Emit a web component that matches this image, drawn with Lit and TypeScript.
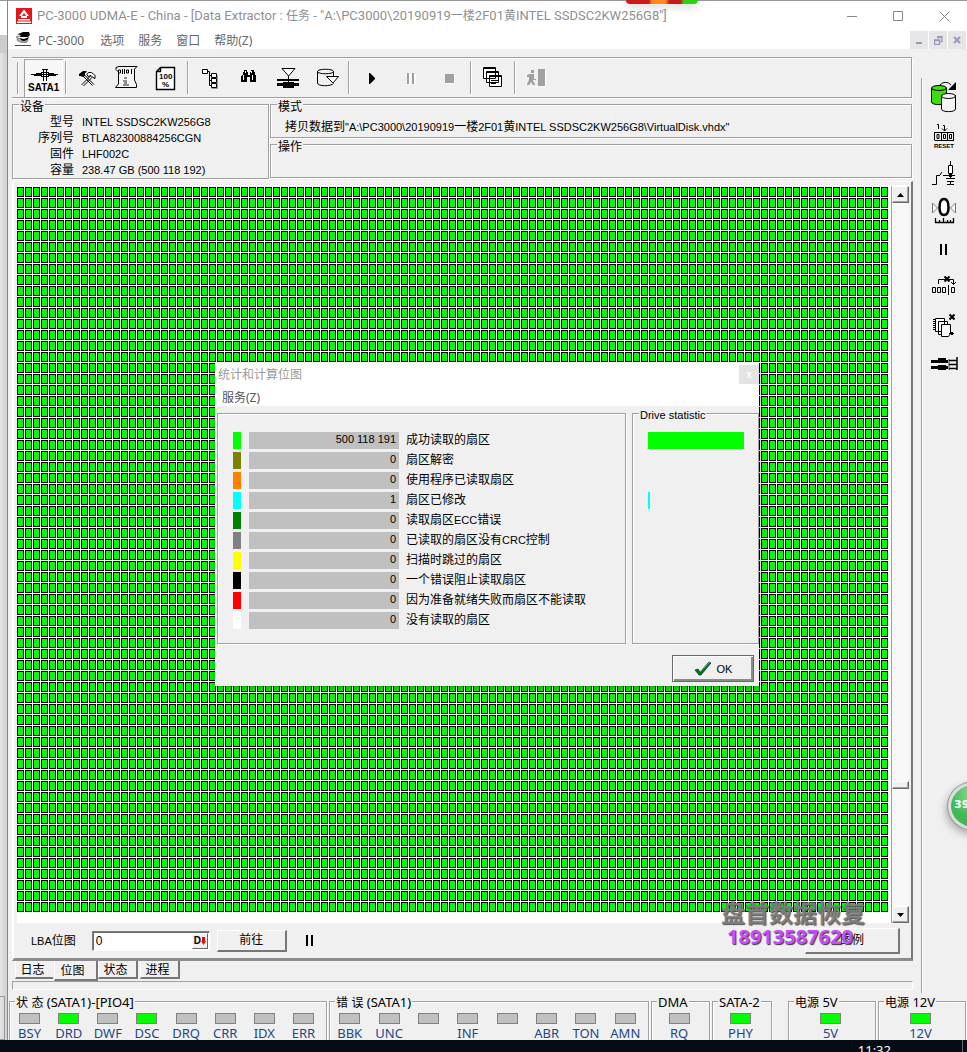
import { LitElement, html, css, svg } from "lit";
import { customElement, property } from "lit/decorators.js";

// Wraps every run of Latin text, which is set at its own size beside the Chinese text.
const mixed = (text: string) =>
  text.split(/([\x20-\x7e]+)/).filter(Boolean).map((part) => (/^[\x20-\x7e]/.test(part) ? html`<span class="latin">${part}</span>` : part));

const toolIcons = {
  sata: svg`<path d="M31 74.5H58" stroke="#000"/><path d="M36 73h6v3h-6zM48 73h6v3h-6zM34 74h2v2h-2zM54 74h2v2h-2z"/><path d="M43.500 69V81M46.500 69V81M42 69.500h6M41 72.500h8M41 76.500h8" stroke="#000" fill="none"/><text x="28" y="91" class="t11">SATA1</text>`,
  tools: svg`<path d="M81.500 85L91 75.500M83.500 86L93 76.500M84 74.500l10 10M83 76l9.500 9.500" stroke="#000" fill="none"/><path d="M79 76v-2l4-3h3l1 1-2 1v3l-3 1-1-1z"/><path d="M88.500 72.500h3l2 1.500 1.500 1.500v3l-2-1-2-2-3 1-1-2z" fill="#fff" stroke="#000"/>`,
  scroll: svg`<path d="M119 66.500H137L134.500 69V80L136.500 84.500V87.500H115.500L118.500 84V72L116 69.500V67.500z" fill="#f6f6f6" stroke="#000"/><path d="M118.500 70v3h2v-3zM122.500 69v5M124.500 69v5M126.500 70v3h2v-3zM131.500 69v5" fill="none" stroke="#000"/><path d="M124 77h3v2h-3zM123 80h4v4h2v2h-6v-2h1v-2h-1z" fill="#909090"/>`,
  percent: svg`<path d="M160.500 67.500H174.500V89.500H156.500V71.500zM156.500 71.500H160.500V67.500" fill="#fff" stroke="#000" stroke-width="1.400"/><text x="159" y="79" class="t8">100</text><text x="162" y="87" class="t8">%</text>`,
  tree: svg`<path d="M202.500 69.500h5v4h-5zM211.500 73.500h5v4h-5zM211.500 78.500h5v4h-5zM211.500 83.500h5v4h-5z" fill="#fff" stroke="#000"/><path d="M208 71.500H209.500V85.500H212M210 75.500h2M210 80.500h2" stroke="#000" fill="none"/><path d="M217.500 75v13.500h-6" stroke="#999" fill="none"/>`,
  binoc: svg`<path d="M243 72h1v-2h3v2h1v3h2v-3h1v-2h3v2h1v3h1v7h-6v-5h-3v5h-6v-6h1v-1h1z"/><path d="M243.500 75v5M252.500 75v5M245.500 71v2M251.500 71v2" stroke="#fff"/>`,
  target: svg`<path d="M282 68.500H295L288.500 76z" fill="#fff" stroke="#000"/><path d="M277 79h22v2h-22zM277 83h22v3h-22zM283 82h11v1h-11zM283 86h11v2h-11zM288 76h1v12h-1z"/>`,
  disk: svg`<path d="M317.500 71.500C317.500 68.500 333.500 68.500 333.500 71.500S317.500 74.500 317.500 71.500V83C317.500 86.500 331 86.500 333.500 83.500M333.500 71V76" fill="none" stroke="#000"/><path d="M326.500 76.500H338.500L333 83z" fill="#fff" stroke="#000"/>`,
  play: svg`<path d="M369 73v11h1l5-5v-1l-5-5z"/>`,
  pause: svg`<path d="M408 74h3v11h-3zM413 74h3v11h-3z" fill="#fff"/><path d="M407 73h2v11h-2zM412 73h2v11h-2z" fill="#a0a0a0"/>`,
  stop: svg`<path d="M446 75h9v9h-9z" fill="#fff"/><path d="M445 74h9v9h-9z" fill="#a0a0a0"/>`,
  windows: svg`<g fill="#fff" stroke="#000"><path d="M483.500 67.500h12v11h-12zM486.500 71.500h12v11h-12zM489.500 75.500h12v11h-12z"/><path d="M483 68.500h13M486 72.500h13M489 76.500h13M491 80.500h8M491 83.500h5"/></g>`,
  exit: svg`<path d="M539 70h7v17h-7z" fill="#fff"/><path d="M538 69h7v17h-7zM531 70h3v3h-3zM529 74h5v5h2v1h-3v1l2 3v1h-2l-2-3-2 3h-2v-1l2-4v-3h-2v-2z" fill="#a0a0a0"/><path d="M528 86.500h9" stroke="#fff" stroke-dasharray="1 1"/>`,
};

const sideIcons = [
  ["复制磁盘", svg`<path d="M931.500 88V102C931.500 105.500 946.500 105.500 946.500 102V88" fill="#3fdc0c" stroke="#000"/><ellipse cx="939" cy="88" rx="7.500" ry="2.500" fill="#3fdc0c" stroke="#000"/><path d="M941.500 95V109C941.500 112.500 955.500 112.500 955.500 109V95" fill="#f4f4f4" stroke="#000"/><ellipse cx="948.500" cy="96" rx="7" ry="2.500" fill="#f4f4f4" stroke="#000"/><path d="M940 85C943 81.500 948 81.500 951 85" fill="none" stroke="#000"/><path d="M956 82v8h-8z"/>`],
  ["复位", svg`<path d="M937 124.500h1.500V129M943 125.500h1.500V131M942 128.500l2.500 2.500L947 128.500" fill="none" stroke="#000"/><path d="M934.500 132.500H954M934.500 140.500H954M934.500 132v8M941.500 132v8M947.500 132v8M953.500 132v8" fill="none" stroke="#000"/><path d="M937 134.500h2v4h-2zM943.500 134.500h2v4h-2zM949.500 134.500h2v4h-2z" fill="none" stroke="#000"/><text x="934" y="148" class="t7">RESET</text>`],
  ["电源开关", svg`<path d="M932 184.500h4.500V175.500H940M940 175l2-3M943 175.500H955M950.500 161V165M950.500 173V178M946 178.500h9M947 181.500h7M950.500 182V184M947 184.500h7" fill="none" stroke="#000"/><path d="M948.500 165.500h4v8h-4z" fill="#fff" stroke="#000"/><path d="M949 174h3v3h-3z"/>`],
  ["重新校准", svg`<path d="M932.500 203v10l5-5zM955.500 203v10l-5-5z" fill="#fff" stroke="#777"/><path d="M944 199C947 199 948.500 202 948.500 207.500S947 215 944 215S939.500 213 939.500 207.500S941 199 944 199z" fill="#fff" stroke="#000" stroke-width="2.500"/><path d="M935 222.500h19M935.500 218v5M939.500 220v3M943.500 218v5M947.500 220v3M950.500 220v3M953.500 218v5" stroke="#000" stroke-width="1.300" fill="none"/>`],
  ["暂停", svg`<path d="M940 244h2v11h-2zM945 244h2v11h-2z"/>`],
  ["跳过", svg`<path d="M938.500 284V279.500H953.500V284M951 282l2.500 2.500L956 282" fill="none" stroke="#000"/><path d="M944.500 276.500l5 5M949.500 276.500l-5 5" stroke="#000" stroke-width="2"/><path d="M932.500 287.500h3v5h-3zM937.500 287.500h3v5h-3zM942.500 287.500h3v5h-3zM951.500 287.500h3v5h-3zM948.500 285v10" fill="none" stroke="#000"/>`],
  ["清除", svg`<path d="M935.500 318.500h9v13h-9zM938.500 321.500h9v13h-9z" fill="#fff" stroke="#000"/><path d="M941.500 324.500h9v9l-2 3h-7z" fill="#fff" stroke="#000"/><path d="M933 319.500h2M933 321.500h2M933 323.500h2M933 325.500h2M933 327.500h2M933 329.500h2" stroke="#000"/><path d="M949.500 314.500l5 5M954.500 314.500l-5 5" stroke="#000" stroke-width="2"/><path d="M949 333h5v1h-5zM951 332h2v3h-2z"/>`],
  ["连接器", svg`<path d="M931 360h17v3h-17zM931 366h17v3h-17zM938 358h8v12h-8z"/><path d="M938 363h9v2h-9z" fill="#f0f0f0"/><path d="M948 359h2v11h-2z" fill="#999"/><path d="M949 360.500h8M949 364.500h8M949 368.500h8M957 357v13" stroke="#000" stroke-width="1.500"/>`],
] as const;

const stats = [
  ["#00ff00", "500 118 191", "成功读取的扇区", 100],
  ["#808000", "0", "扇区解密", 0],
  ["#ff8000", "0", "使用程序已读取扇区", 0],
  ["#00ffff", "1", "扇区已修改", 2],
  ["#008000", "0", "读取扇区ECC错误", 0],
  ["#808080", "0", "已读取的扇区没有CRC控制", 0],
  ["#ffff00", "0", "扫描时跳过的扇区", 0],
  ["#000000", "0", "一个错误阻止读取扇区", 0],
  ["#ff0000", "0", "因为准备就绪失败而扇区不能读取", 0],
  ["#ffffff", "0", "没有读取的扇区", 0],
] as const;

const toolGroups: [string, keyof typeof toolIcons, number][][] = [
  [["SATA1", "sata", 24]],
  [["工具", "tools", 68], ["脚本", "scroll", 107], ["进度", "percent", 146]],
  [["树", "tree", 190], ["查找", "binoc", 229], ["目标", "target", 268], ["磁盘", "disk", 307]],
  [["开始", "play", 351], ["暂停", "pause", 390], ["停止", "stop", 429]],
  [["窗口", "windows", 473]],
  [["退出", "exit", 517]],
];

const iconText = css`
  svg { display: block; fill: #000; }
  .t11 { font: bold 10px "Liberation Sans", sans-serif; }
  .t7 { font: bold 6px "Liberation Sans", sans-serif; }
  .t8 { font: bold 8px "Liberation Sans", sans-serif; }
`;

@customElement("led-group")
class LedGroup extends LitElement {
  @property() caption = "";
  @property({ type: Array }) leds: [string, boolean][] = [];
  static styles = css`
    :host { display: block; position: relative; height: 48px; border: 1px solid #a0a0a0; box-shadow: inset 1px 1px 0 #fff, 1px 0 0 #fff; box-sizing: border-box; padding: 11px 3px 0 0; min-width: 0; }
    .caption { position: absolute; left: 5px; top: -10px; background: #f0f0f0; padding: 0 1px; font-size: 12px; line-height: 20px; white-space: nowrap; color: #000; }
    .latin { font-size: 13px; }
    .leds { display: flex; }
    .led { flex: 1; display: flex; flex-direction: column; align-items: center; gap: 2px; min-width: 0; }
    .lamp { width: 21px; height: 11px; box-sizing: border-box; border: 1px solid #808080; background: #c0c0c0; }
    .on { background: #00ff00; }
    .name { font-size: 13px; line-height: 14px; color: #1c4785; }
  `;
  render() {
    return html`<span class="caption">${mixed(this.caption)}</span>
      <div class="leds">${this.leds.map(([n, on]) => html`<div class="led"><i class="lamp ${on ? "on" : ""}"></i><span class="name">${n}</span></div>`)}</div>`;
  }
}

@customElement("tool-bar")
class ToolBar extends LitElement {
  static styles = [iconText, css`
    :host { display: flex; height: 39px; border: 1px solid #a0a0a0; border-left: 0; box-shadow: inset 0 1px 0 #fff, 1px 1px 0 #fff; padding-left: 5px; margin-right: 1px; }
    .grip { width: 1px; margin: 4px 6px 3px 0; background: #a0a0a0; box-shadow: 1px 0 0 #fff; }
    .sep { width: 1px; margin: 3px 2px; background: #a0a0a0; box-shadow: 1px 0 0 #fff; }
    button { width: 39px; height: 38px; margin-top: 1px; padding: 0; border: 0; background: none; flex: none; }
    .down { background: #f7f7f7; box-shadow: inset 1px 1px 0 #a0a0a0, inset -1px -1px 0 #fff; }
  `];
  render() {
    return html`<i class="grip"></i>${toolGroups.map((g, i) => html`${i ? html`<i class="sep"></i>` : ""}${g.map(([label, icon, x]) => html`<button class=${icon === "sata" ? "down" : ""} aria-label=${label}><svg width="39" height="38" viewBox="${x} 59 39 38">${toolIcons[icon]}</svg></button>`)}`)}`;
  }
}

@customElement("stat-dialog")
class StatDialog extends LitElement {
  static styles = css`
    :host { display: block; overflow: hidden; background: #f0f0f0; box-shadow: 0 2px 8px rgba(0, 0, 0, 0.35); font: 12px/16px "Liberation Sans", "Noto Sans CJK SC", sans-serif; }
    .latin { font-size: 11px; }
    header { display: flex; justify-content: space-between; background: #fff; height: 24px; padding: 3px 0 0 3px; box-sizing: border-box; color: #999; line-height: 20px; }
    .close { width: 20px; height: 19px; border: 0; padding: 0; background: #e3e3e3; color: #fff; font: bold 10px/18px "Liberation Sans", sans-serif; }
    nav { background: #fff; padding: 2px 7px; height: 20px; box-sizing: border-box; color: #555; font-family: "Noto Sans", "Noto Sans CJK SC", sans-serif; line-height: 19px; }
    .groups { display: grid; grid-template-columns: 409px 1fr; column-gap: 6px; padding: 7px 0 0 2px; }
    .group { position: relative; border: 1px solid #a0a0a0; box-shadow: inset 1px 1px 0 #fff, 1px 1px 0 #fff; padding: 18px 14px 14px 15px; height: 197px; display: flex; flex-direction: column; gap: 3px; }
    .caption { position: absolute; left: 6px; top: -7px; padding: 0 1px; background: #f0f0f0; line-height: 16px; font-size: 11px; }
    .row { display: flex; height: 17px; white-space: nowrap; }
    .swatch { width: 8px; margin-right: 8px; flex: none; }
    .value { width: 147px; padding-right: 3px; background: #c0c0c0; text-align: right; line-height: 15px; margin-right: 7px; flex: none; }
    .name { line-height: 16px; }
    .bar { height: 17px; }
    footer { display: flex; justify-content: flex-end; padding: 11px 5px 4px; }
    .ok { width: 82px; height: 27px; display: flex; align-items: center; justify-content: center; gap: 5px; background: #f0f0f0; border: 1px solid #696969; box-shadow: inset 1px 1px 0 #fff, inset -2px -2px 0 #8a8a8a; font: 11px "Liberation Sans", sans-serif; padding: 0; color: #000; }
  `;
  render() {
    return html`<header><span>统计和计算位图</span><button class="close" aria-label="关闭">x</button></header>
      <nav>服务(Z)</nav>
      <div class="groups">
        <div class="group">${stats.map(([c, v, n]) => html`<div class="row"><i class="swatch" style="background:${c}"></i><span class="value">${mixed(v)}</span><span class="name">${mixed(n)}</span></div>`)}</div>
        <div class="group"><span class="caption">Drive statistic</span>${stats.map(([c, , , w]) => html`<div class="bar" style="background:${c};width:${w}%"></div>`)}</div>
      </div>
      <footer><button class="ok"><svg width="18" height="16" viewBox="0 0 18 16"><path d="M1 9l3-1 2 3L15 1l2 1L7 14H5z" fill="#008000" stroke="#000060" stroke-width=".6"/><path d="M6 11L16 1" stroke="#0d0" /></svg>OK</button></footer>`;
  }
}

@customElement("app-root")
class AppRoot extends LitElement {
  static styles = [iconText, css`
    :host { display: flex; flex-direction: column; position: relative; height: 100vh; overflow: hidden; background: #f0f0f0; color: #000; font: 12px/16px "Liberation Sans", "Noto Sans CJK SC", sans-serif; }
    button { font: inherit; color: #000; padding: 0; }
    .latin { font-size: 11px; }
    .desk { flex: 1; display: flex; min-height: 0; }
    .behind { width: 7px; flex: none; border-right: 1px solid #888; background: linear-gradient(90deg, #e4e4e4, #cfcfcf); display: flex; flex-direction: column; justify-content: space-between; }
    .behind-top { height: 52px; background: linear-gradient(#fff 0 34px, #ccc 34px); border-top: 1px solid #999; }
    .behind-low { height: 42px; width: 4px; border: 1px solid #999; border-left: 0; }
    .window { flex: 1; min-width: 0; display: flex; flex-direction: column; border-top: 1px solid #999; }
    .ui { font-family: "Noto Sans", "Noto Sans CJK SC", sans-serif; }
    .title { display: flex; align-items: center; height: 30px; background: #fff; color: #909090; padding-left: 8px; white-space: nowrap; }
    .title h1 { margin: 0 0 0 5px; font-size: 12px; font-weight: normal; flex: 1; overflow: hidden; }
    .title .latin { font: 13px/16px Roboto, "Noto Sans", sans-serif; }
    .winbtns { display: flex; }
    .winbtns button { width: 46px; height: 29px; border: 0; background: none; display: grid; place-items: center; }
    .menu { display: flex; height: 18px; background: #fff; color: #666; padding-left: 7px; line-height: 20px; }
    .menu a { color: inherit; text-decoration: none; margin-right: 14px; }
    .menu a:first-of-type { margin-right: 16px; }
    .menu svg { margin-right: 7px; }
    .mdi { margin-left: auto; display: flex; gap: 1px; padding-right: 1px; }
    .mdi button { width: 18px; height: 18px; border: 0; background: #e6e6e6; display: grid; place-items: center; }
    .mdi svg { margin: 0; }
    .work { flex: 1; min-height: 0; display: flex; padding: 8px 0 0 4px; gap: 8px; }
    .left { flex: 1; min-width: 0; display: flex; flex-direction: column; }
    .info { display: grid; grid-template-columns: 257px 1fr; column-gap: 1px; height: 75px; margin: 6px 1px 2px 0; }
    .group { position: relative; border: 1px solid #a0a0a0; box-shadow: inset 1px 1px 0 #fff, 1px 1px 0 #fff; box-sizing: border-box; }
    .caption { position: absolute; left: 6px; top: -6px; background: #f0f0f0; padding: 0 1px; }
    .device { margin-bottom: 1px; display: grid; grid-template-columns: 61px 1fr; column-gap: 8px; padding-top: 9px; grid-auto-rows: 16px; }
    .device dl { display: contents; }
    .device dt { text-align: right; }
    .device dd { margin: 0; }
    .modes { display: grid; grid-template-rows: 34px 34px; row-gap: 6px; }
    .mode { padding: 14px 14px 0; white-space: nowrap; }
    .panel { flex: 1; min-height: 0; display: flex; flex-direction: column; border: 1px solid #fff; border-left: 2px solid #fff; border-right: 2px solid #777; border-bottom: 3px solid #8c8c8c; padding: 3px 2px 0 3px; }
    .mapwrap { flex: 1; min-height: 0; display: flex; background: #fff; border-top: 1px solid #fff; }
    .map { flex: 1; min-width: 0; margin: 1px 3px 0 0; height: calc(100% - 11px); }
    .scroll { width: 17px; background: #f8f8f8; border-left: 1px solid #a0a0a0; display: flex; flex-direction: column; }
    .scroll button, .thumb { width: 17px; height: 17px; border: 1px solid #fff; border-right-color: #696969; border-bottom-color: #696969; background: #f0f0f0; box-shadow: inset -1px -1px 0 #a0a0a0; display: grid; place-items: center; box-sizing: border-box; }
    .thumb { height: 8px; }
    .above { flex: 578; }
    .below { flex: 117; }
    .controls { display: flex; align-items: center; height: 35px; padding: 0 9px 0 14px; }
    .controls label { margin-right: 16px; }
    .combo { display: flex; width: 118px; height: 20px; box-sizing: border-box; border: 1px solid #808080; border-right-color: #fff; border-bottom-color: #fff; box-shadow: inset 1px 1px 0 #696969; background: #fff; padding: 1px; }
    .combo input { flex: 1; min-width: 0; border: 0; background: none; font: inherit; padding: 0 2px; outline: 0; }
    .combo button { width: 16px; border: 1px solid #fff; border-right-color: #696969; border-bottom-color: #696969; background: #f0f0f0; font: bold 10px/12px "Liberation Sans", sans-serif; display: flex; align-items: center; justify-content: center; }
    .push { height: 22px; width: 70px; border: 1px solid #fff; border-right: 2px solid #777; border-bottom: 2px solid #777; background: #f0f0f0; }
    .go { margin: 0 19px 0 7px; }
    .legend { margin-left: auto; width: 95px; height: 26px; }
    .tabs { display: flex; height: 20px; padding-left: 3px; align-items: flex-start; }
    .tabs button { height: 18px; width: 40px; margin-right: 2px; padding: 0 4px 0 0; background: #f0f0f0; border: 1px solid #fff; border-top: 0; border-right: 2px solid #777; border-bottom: 2px solid #777; line-height: 18px; }
    .tabs button.first { border-right: 0; width: 38px; margin-right: 1px; }
    .tabs button.active { height: 20px; width: 44px; margin-right: 0; line-height: 21px; padding-right: 6px; }
    .strip { height: 7px; margin: 0 0 3px; border: 1px solid #fff; border-top-color: #a0a0a0; border-left-color: #a0a0a0; }
    .side { width: 45px; flex: none; border-left: 1px solid #a0a0a0; box-shadow: inset 1px 0 0 #fff; margin-top: 21px; }
    .side button { display: block; border: 0; background: none; width: 45px; height: 38px; }
    .status { display: grid; grid-template-columns: 318fr 320fr 59fr 60fr 12fr 88fr 88fr; column-gap: 2px; height: 39px; overflow: hidden; padding: 8px 1px 0; }
    .psu { grid-column: 6; }
    .taskbar { height: 12px; flex: none; background: #050c14; color: #fff; overflow: hidden; display: flex; justify-content: flex-end; }
    .clock { margin-right: 71px; padding-top: 2px; font: 13px/16px "Noto Sans", sans-serif; }
    .peek { width: 4px; border-left: 1px solid #667; }
    stat-dialog { position: absolute; left: 215px; top: 362px; width: 544px; height: 324px; }
    .watermark { position: absolute; right: 100px; top: 898px; width: 146px; pointer-events: none; font: bold 24px/28px "Noto Sans CJK SC", sans-serif; color: rgba(128, 128, 128, 0.9); text-shadow: 1px 1px 1px #555; white-space: nowrap; }
    .phone { display: block; font: bold 20px/22px "Noto Sans", sans-serif; color: #c44dff; padding-left: 6px; text-shadow: 1px 1px 1px #333; }
    .ball { position: absolute; right: -33px; top: 782px; width: 43px; height: 42px; border: 3px solid #ddd; border-radius: 50%; outline: 1px solid #999; background: radial-gradient(circle at 50% 20%, #8fe08f, #3fb958 60%); color: #fff; font: bold 11px/40px "DejaVu Sans", sans-serif; padding-left: 3px; box-shadow: -2px 4px 8px rgba(0, 0, 0, 0.3); }
    .sticker { position: absolute; left: 626px; top: 0; width: 72px; height: 4px; border-radius: 0 0 6px 6px; background: linear-gradient(90deg, #d01818 32%, #ff8a20 36% 55%, #c81818 60% 76%, #2fd010 80%); box-shadow: 0 2px 8px rgba(0, 0, 0, 0.25); }
  `];

  render() {
    return html`
      <div class="desk">
        <div class="behind"><div class="behind-top"></div><div class="behind-low"></div></div>
        <div class="window">
          <div class="title ui">
            <svg width="16" height="16" viewBox="0 0 16 16"><path d="M0 0h16v16H0z" fill="#e4151b"/><path d="M8 1.500L3 8h2v2h6V8h2zM8 5l2 3H6zM2 11h12v1.500H2zM1 13.500h14V15H1z" fill="#fff" fill-rule="evenodd"/></svg>
            <h1>${mixed('PC-3000 UDMA-E - China - [Data Extractor : 任务 - "A:\\PC3000\\20190919一楼2F01黄INTEL SSDSC2KW256G8"]')}</h1>
            <div class="winbtns">
              <button aria-label="最小化"><svg width="11" height="11"><path d="M0 5.500h10" stroke="#888"/></svg></button>
              <button aria-label="最大化"><svg width="11" height="11"><path d="M.5.5h9v9h-9z" fill="none" stroke="#888"/></svg></button>
              <button aria-label="关闭"><svg width="11" height="11"><path d="M.5.5l10 10M10.500.5l-10 10" stroke="#888"/></svg></button>
            </div>
          </div>
          <nav class="menu ui">
            <svg width="16" height="16" viewBox="0 0 16 16"><path d="M3 3l5-2h6l1 3-2 2H3zM4 7l3 3h5l2-4-5 2z"/><path d="M1 5l1 5 4 2h6l2-4-5 2-4-1-2-4z" fill="#999"/><path d="M2 3l4 1-2 3z" fill="#ccc"/><path d="M0 14h16v1H0z" fill="#e00"/></svg>
            ${["PC-3000", "选项", "服务", "窗口", "帮助(Z)"].map((m) => html`<a href="#">${m}</a>`)}
            <div class="mdi">
              <button aria-label="子窗口最小化"><svg width="8" height="8"><path d="M1 6h6v2H1z" fill="#9a97bd"/></svg></button>
              <button aria-label="子窗口还原"><svg width="9" height="9"><path d="M3 .5h5v5H6M3 1.500h5M.5 4h5v4.500h-5zM.5 4.500h5" fill="none" stroke="#9a97bd" stroke-width="1.300"/></svg></button>
              <button aria-label="子窗口关闭"><svg width="8" height="8"><path d="M1 1l6 6M7 1L1 7" stroke="#9a97bd" stroke-width="2"/></svg></button>
            </div>
          </nav>
          <div class="work">
            <div class="left">
              <tool-bar></tool-bar>
              <div class="info">
                <div class="group device"><span class="caption">设备</span>
                  <dl>
                    <dt>型号</dt><dd class="latin">INTEL SSDSC2KW256G8</dd>
                    <dt>序列号</dt><dd class="latin">BTLA82300884256CGN</dd>
                    <dt>固件</dt><dd class="latin">LHF002C</dd>
                    <dt>容量</dt><dd class="latin">238.47 GB (500 118 192)</dd>
                  </dl>
                </div>
                <div class="modes">
                  <div class="group mode"><span class="caption">模式</span>${mixed('拷贝数据到"A:\\PC3000\\20190919一楼2F01黄INTEL SSDSC2KW256G8\\VirtualDisk.vhdx"')}</div>
                  <div class="group"><span class="caption">操作</span></div>
                </div>
              </div>
              <div class="panel">
                <div class="mapwrap">
                  <svg class="map" shape-rendering="crispEdges">
                    <defs><pattern id="cell" width="8" height="11" patternUnits="userSpaceOnUse"><rect width="7" height="10" fill="#000"/><rect x="1" y="1" width="5" height="8" fill="#00ff00"/></pattern></defs>
                    <rect width="100%" height="100%" fill="url(#cell)"/>
                  </svg>
                  <div class="scroll">
                    <button aria-label="向上"><svg width="7" height="4"><path d="M0 4h7L3.500 0z"/></svg></button>
                    <div class="above"></div><div class="thumb"></div><div class="below"></div>
                    <button aria-label="向下"><svg width="7" height="4"><path d="M0 0h7L3.500 4z"/></svg></button>
                  </div>
                </div>
                <div class="controls">
                  <label for="lba">${mixed("LBA位图")}</label>
                  <div class="combo"><input id="lba" value="0" /><button aria-label="格式">D<svg width="5" height="8"><path d="M1 0h3v4h1L2.500 8 0 4h1z" fill="#f00"/></svg></button></div>
                  <button class="push go">前往</button>
                  <svg width="8" height="11"><path d="M0 0h2v11H0zM5 0h2v11H5z"/></svg>
                  <button class="push legend">图例</button>
                </div>
              </div>
              <div class="tabs"><button class="first">日志</button><button class="active">位图</button><button>状态</button><button>进程</button></div>
              <div class="strip"></div>
            </div>
            <div class="side">${sideIcons.map(([label, icon], i) => html`<button aria-label=${label}><svg width="45" height="38" viewBox="922 ${78 + i * 38} 45 38">${icon}</svg></button>`)}</div>
          </div>
          <div class="status ui">
            <led-group caption="状 态 (SATA1)-[PIO4]" .leds=${[["BSY", false], ["DRD", true], ["DWF", false], ["DSC", true], ["DRQ", false], ["CRR", false], ["IDX", false], ["ERR", false]]}></led-group>
            <led-group caption="错 误 (SATA1)" .leds=${[["BBK", false], ["UNC", false], ["", false], ["INF", false], ["", false], ["ABR", false], ["TON", false], ["AMN", false]]}></led-group>
            <led-group caption="DMA" .leds=${[["RQ", false]]}></led-group>
            <led-group caption="SATA-2" .leds=${[["PHY", true]]}></led-group>
            <led-group class="psu" caption="电源 5V" .leds=${[["5V", true]]}></led-group>
            <led-group caption="电源 12V" .leds=${[["12V", true]]}></led-group>
          </div>
        </div>
      </div>
      <div class="taskbar"><span class="clock">11:32</span><i class="peek"></i></div>
      <stat-dialog></stat-dialog>
      <div class="watermark">盘首数据恢复<span class="phone">18913587620</span></div>
      <div class="ball">39</div>
      <div class="sticker"></div>
    `;
  }
}
